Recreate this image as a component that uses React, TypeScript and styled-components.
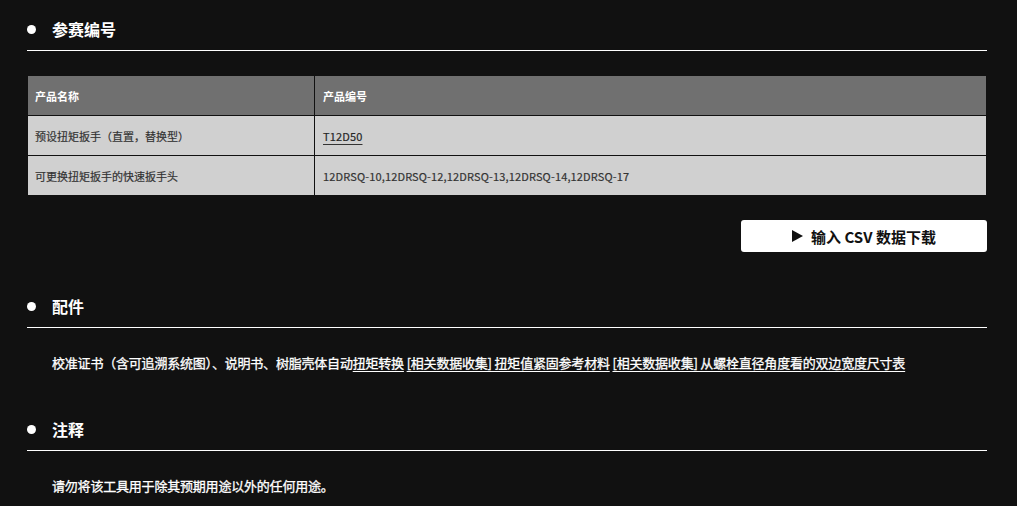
import React from 'react';
import styled, { createGlobalStyle } from 'styled-components';

const GlobalStyle = createGlobalStyle`
  html, body {
    margin: 0;
    padding: 0;
    background: #111111;
  }
  body {
    font-family: "Noto Sans CJK SC", "Noto Sans", sans-serif;
    color: #ffffff;
  }
`;

const Page = styled.div`
  width: 960px;
  padding: 8px 30px 0 27px;
`;

const Section = styled.section<{ $gap: number }>`
  margin-top: ${props => props.$gap}px;
`;

const Heading = styled.h2`
  display: flex;
  align-items: center;
  height: 42px;
  margin: 0;
  border-bottom: 1px solid #ffffff;
  font-size: 16px;
  font-weight: 700;
  line-height: 1;
  color: #ffffff;

  &::before {
    content: '';
    width: 9px;
    height: 9px;
    border-radius: 50%;
    background: #ffffff;
    margin-right: 16px;
  }
`;

const Table = styled.table`
  width: 100%;
  margin-top: 24px;
  border-collapse: collapse;
  border: 1px solid #111111;
  font-size: 11px;
`;

const HeadCell = styled.th<{ $width?: number }>`
  width: ${props => (props.$width ? `${props.$width}px` : 'auto')};
  height: 39px;
  padding: 0 8px 0 7px;
  background: #707070;
  color: #ffffff;
  font-weight: 700;
  text-align: left;
  border: 1px solid #111111;
  border-top: none;

  & + & {
    padding-left: 8px;
  }
`;

const Cell = styled.td`
  height: 39px;
  padding: 0 8px 0 7px;
  background: #d0d0d0;
  color: #333333;
  border: 1px solid #111111;
  -webkit-text-stroke: 0.2px #333333;

  & + & {
    padding-left: 8px;
    letter-spacing: 0.15px;
  }
`;

const CodeLink = styled.a`
  color: #222222;
  text-decoration: underline;
  text-underline-offset: 3px;
`;

const Actions = styled.div`
  display: flex;
  justify-content: flex-end;
  margin-top: 24px;
`;

const DownloadButton = styled.button`
  display: flex;
  align-items: center;
  justify-content: center;
  gap: 8px;
  width: 246px;
  height: 32px;
  border: none;
  border-radius: 3px;
  background: #ffffff;
  color: #111111;
  font-family: inherit;
  font-size: 15px;
  font-weight: 700;
  cursor: pointer;
`;

const Triangle = styled.span`
  width: 0;
  height: 0;
  border-top: 6px solid transparent;
  border-bottom: 6px solid transparent;
  border-left: 11px solid #111111;
`;

const Paragraph = styled.p`
  margin: 25px 0 0 25px;
  font-size: 13px;
  line-height: 20px;
  letter-spacing: -0.2px;
  color: #ffffff;
  -webkit-text-stroke: 0.3px #ffffff;
`;

const TextLink = styled.a`
  color: #ffffff;
  text-decoration: underline;
  text-underline-offset: 3px;
`;

const rows = [
  { name: '预设扭矩扳手（直置，替换型）', code: 'T12D50', link: true },
  {
    name: '可更换扭矩扳手的快速扳手头',
    code: '12DRSQ-10,12DRSQ-12,12DRSQ-13,12DRSQ-14,12DRSQ-17',
    link: false,
  },
];

export default function App() {
  return (
    <>
      <GlobalStyle />
      <Page>
        <Section $gap={0}>
          <Heading>参赛编号</Heading>
          <Table>
            <thead>
              <tr>
                <HeadCell $width={271}>产品名称</HeadCell>
                <HeadCell>产品编号</HeadCell>
              </tr>
            </thead>
            <tbody>
              {rows.map(row => (
                <tr key={row.code}>
                  <Cell>{row.name}</Cell>
                  <Cell>{row.link ? <CodeLink href="#">{row.code}</CodeLink> : row.code}</Cell>
                </tr>
              ))}
            </tbody>
          </Table>
          <Actions>
            <DownloadButton>
              <Triangle />
              输入 CSV 数据下载
            </DownloadButton>
          </Actions>
        </Section>

        <Section $gap={33}>
          <Heading>配件</Heading>
          <Paragraph>
            校准证书（含可追溯系统图）、说明书、树脂壳体自动
            <TextLink href="#">扭矩转换</TextLink> <TextLink href="#">[相关数据收集] 扭矩值紧固参考材料</TextLink>{' '}
            <TextLink href="#">[相关数据收集] 从螺栓直径角度看的双边宽度尺寸表</TextLink>
          </Paragraph>
        </Section>

        <Section $gap={35}>
          <Heading>注释</Heading>
          <Paragraph>请勿将该工具用于除其预期用途以外的任何用途。</Paragraph>
        </Section>
      </Page>
    </>
  );
}
